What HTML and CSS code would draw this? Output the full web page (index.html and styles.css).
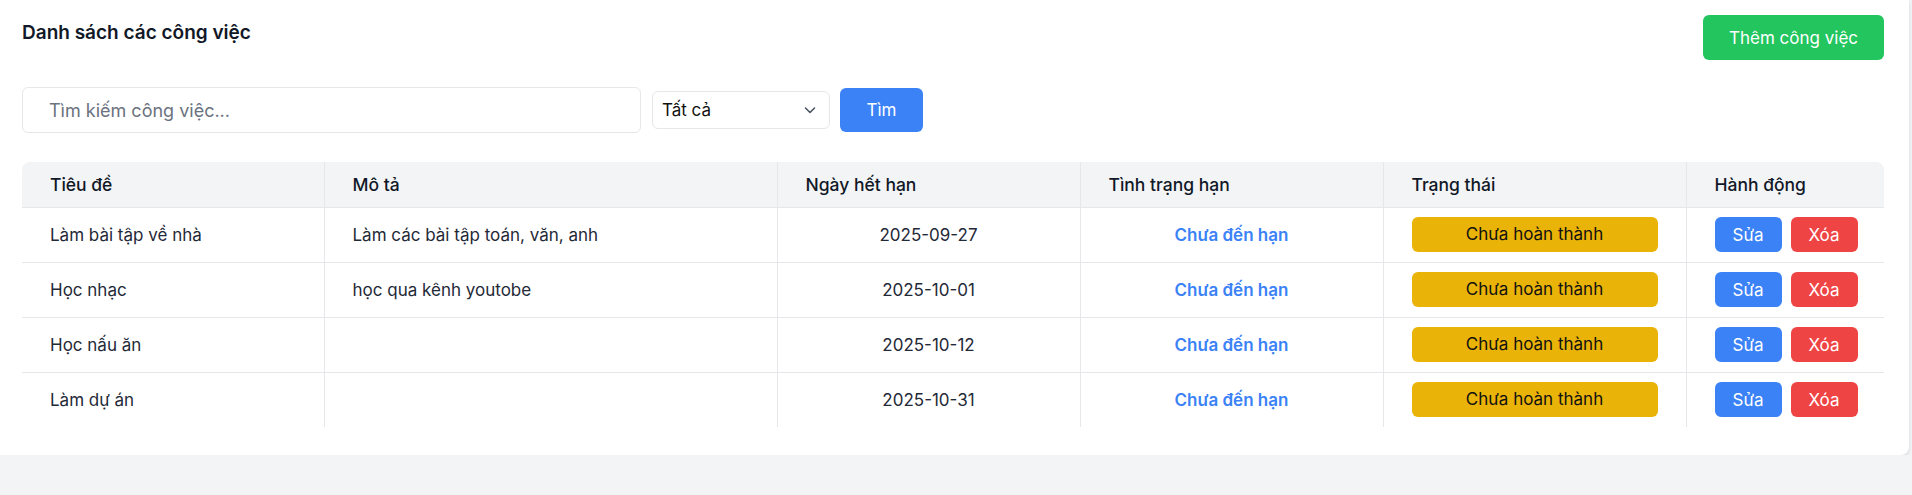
FILE: index.html
```
<!DOCTYPE html>
<html lang="vi">
<head>
<meta charset="utf-8">
<title>Danh sách các công việc</title>
<link rel="stylesheet" href="styles.css">
</head>
<body>
<div class="card">
  <div class="topbar">
    <h1 class="title">Danh sách các công việc</h1>
    <button class="btn btn-green">Thêm công việc</button>
  </div>
  <div class="search-row">
    <input class="search" type="text" placeholder="Tìm kiếm công việc...">
    <div class="select">
      <span>Tất cả</span>
      <svg class="chev" width="14" height="14" viewBox="0 0 14 14"><path d="M2.5 5 L7 9.5 L11.5 5" fill="none" stroke="#4b5563" stroke-width="1.6" stroke-linecap="round" stroke-linejoin="round"/></svg>
    </div>
    <button class="btn btn-blue btn-search">Tìm</button>
  </div>
  <div class="table-wrap">
    <table class="tbl">
      <colgroup>
        <col class="c1"><col class="c2"><col class="c3"><col class="c4"><col class="c5"><col class="c6">
      </colgroup>
      <thead>
        <tr>
          <th>Tiêu đề</th><th>Mô tả</th><th>Ngày hết hạn</th><th>Tình trạng hạn</th><th>Trạng thái</th><th>Hành động</th>
        </tr>
      </thead>
      <tbody>
        <tr>
          <td>Làm bài tập về nhà</td><td>Làm các bài tập toán, văn, anh</td><td class="center">2025-09-27</td>
          <td class="center due">Chưa đến hạn</td><td><div class="badge">Chưa hoàn thành</div></td>
          <td><div class="actions"><button class="btn btn-blue btn-sm">Sửa</button><button class="btn btn-red btn-sm">Xóa</button></div></td>
        </tr>
        <tr>
          <td>Học nhạc</td><td>học qua kênh youtobe</td><td class="center">2025-10-01</td>
          <td class="center due">Chưa đến hạn</td><td><div class="badge">Chưa hoàn thành</div></td>
          <td><div class="actions"><button class="btn btn-blue btn-sm">Sửa</button><button class="btn btn-red btn-sm">Xóa</button></div></td>
        </tr>
        <tr>
          <td>Học nấu ăn</td><td></td><td class="center">2025-10-12</td>
          <td class="center due">Chưa đến hạn</td><td><div class="badge">Chưa hoàn thành</div></td>
          <td><div class="actions"><button class="btn btn-blue btn-sm">Sửa</button><button class="btn btn-red btn-sm">Xóa</button></div></td>
        </tr>
        <tr>
          <td>Làm dự án</td><td></td><td class="center">2025-10-31</td>
          <td class="center due">Chưa đến hạn</td><td><div class="badge">Chưa hoàn thành</div></td>
          <td><div class="actions"><button class="btn btn-blue btn-sm">Sửa</button><button class="btn btn-red btn-sm">Xóa</button></div></td>
        </tr>
      </tbody>
    </table>
  </div>
</div>
</body>
</html>
```
FILE: styles.css
```
* { box-sizing: border-box; }
html, body { margin: 0; padding: 0; }
body {
  background: #f3f4f6;
  font-family: Inter, "Noto Sans", "DejaVu Sans", sans-serif;
  color: #1f2937;
  font-size: 17px;
}
.card {
  width: 1909px;
  background: #fff;
  padding: 15px 25px 28px 22px;
  border-bottom-right-radius: 8px;
  box-shadow: 0 2px 4px rgba(0,0,0,0.12);
}
.topbar {
  display: flex;
  justify-content: space-between;
  align-items: flex-start;
  height: 45px;
}
.title {
  margin: 0;
  padding-top: 4px;
  font-size: 19px;
  line-height: 28px;
  font-weight: 600;
  color: #111827;
}
.btn {
  border: none;
  font-family: inherit;
  font-size: 17px;
  color: #fff;
  border-radius: 6px;
  cursor: pointer;
}
.btn-green {
  background: #22c55e;
  width: 181px;
  height: 45px;
}
.btn-blue { background: #3b82f6; }
.btn-red { background: #ef4444; }
.search-row {
  display: flex;
  align-items: center;
  margin-top: 27px;
}
.search {
  width: 619px;
  height: 46px;
  border: 1px solid #e5e7eb;
  border-radius: 6px;
  padding: 0 26px;
  font-family: inherit;
  font-size: 18px;
  color: #1f2937;
  outline: none;
}
.search::placeholder { color: #6b7280; }
.select {
  width: 178px;
  height: 38px;
  margin-left: 11px;
  border: 1px solid #e5e7eb;
  border-radius: 6px;
  display: flex;
  align-items: center;
  justify-content: space-between;
  padding: 0 12px 0 9px;
  color: #111;
  font-size: 17px;
}
.chev { display: block; }
.btn-search {
  width: 83px;
  height: 44px;
  margin-left: 10px;
}
.table-wrap {
  margin-top: 29px;
  width: 1862px;
  border-radius: 8px 8px 0 0;
  overflow: hidden;
}
.tbl {
  width: 1862px;
  border-collapse: collapse;
  table-layout: fixed;
}
.c1 { width: 302px; }
.c2 { width: 453px; }
.c3 { width: 303px; }
.c4 { width: 303px; }
.c5 { width: 303px; }
.c6 { width: 198px; }
.tbl th {
  height: 45px;
  background: #f3f4f6;
  text-align: left;
  font-weight: 500;
  font-size: 17.5px;
  color: #111827;
  padding: 0 28px;
  border-right: 1px solid #e5e7eb;
  border-bottom: 1px solid #e5e7eb;
}
.tbl td {
  height: 55px;
  padding: 0 28px;
  border-right: 1px solid #e5e7eb;
  border-bottom: 1px solid #e5e7eb;
  color: #1f2937;
}
.tbl th:last-child, .tbl td:last-child { border-right: none; }
.tbl tbody tr:last-child td { border-bottom: none; }
.tbl td.center { text-align: center; }
.tbl td.due { color: #3b82f6; font-weight: 600; }
.badge {
  background: #eab308;
  color: #111;
  height: 35px;
  line-height: 35px;
  border-radius: 6px;
  text-align: center;
}
.actions { display: flex; gap: 9px; }
.btn-sm {
  height: 35px;
  padding: 0 18px;
}
```
